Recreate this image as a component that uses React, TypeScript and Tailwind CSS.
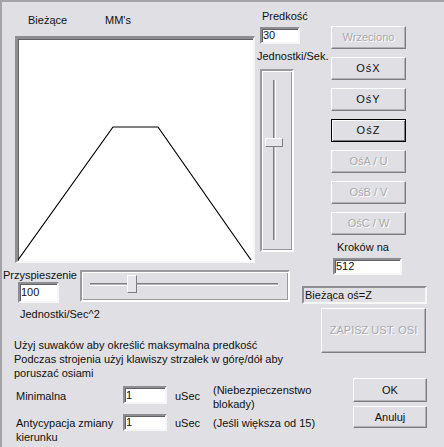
import React from "react";

const raised =
  "border border-t-white border-l-white border-r-[#7d7d81] border-b-[#7d7d81] shadow-[inset_-1px_-1px_0_#b2b2b6]";
const sunken =
  "border-2 border-t-[#8e8e92] border-l-[#8e8e92] border-r-[#f7f7f7] border-b-[#f7f7f7] shadow-[inset_1px_1px_0_#626266]";
const etched =
  "border-2 border-t-[#9a9a9e] border-l-[#9a9a9e] border-r-white border-b-white shadow-[inset_1px_1px_0_#ffffff,inset_-1px_-1px_0_#9a9a9e]";

interface BtnProps {
  label: string;
  disabled?: boolean;
  focused?: boolean;
  className?: string;
}

const Btn = ({ label, disabled, focused, className }: BtnProps) => (
  <div
    className={`flex items-center justify-center bg-[#e0dfe3] text-[11px] ${
      focused
        ? "border border-black shadow-[inset_1px_1px_0_#ffffff,inset_-1px_-1px_0_#7d7d81]"
        : raised
    } ${disabled ? "text-[#a9a9ad] [text-shadow:1px_1px_0_#ffffff]" : "text-[#111]"} ${className ?? ""}`}
  >
    {label}
  </div>
);

const Field = ({ value, className }: { value: string; className?: string }) => (
  <div className={`flex items-center bg-white pl-[1px] ${sunken} ${className ?? ""}`}>{value}</div>
);

const Thumb = ({ className }: { className: string }) => (
  <div
    className={`absolute bg-[#e6e6ea] border border-t-white border-l-white border-r-[#7d7d81] border-b-[#7d7d81] ${className}`}
  />
);

export default function App() {
  return (
    <div className="w-[444px] h-[447px] overflow-hidden bg-[#e0dfe3] border-l-2 border-t-2 border-[#a4a4a8] text-[11px] leading-[13px] text-[#111] font-['Liberation_Sans',Arial,sans-serif]">
      {/* top part: graph, speed slider, axis buttons */}
      <div className="flex h-[261px]">
        <div className="ml-[13px] w-[240px] flex flex-col">
          <div className="flex h-[34px] pt-[12px] pl-[13px]">
            <span className="w-[77px]">Bieżące</span>
            <span>MM's</span>
          </div>
          <div className={`relative h-[227px] bg-white ${sunken} border-t-[3px] border-l-[3px]`}>
            <svg className="absolute inset-0" width="235" height="222" viewBox="0 0 235 222">
              <polyline
                points="0,221 95,88 140,88 233,221"
                fill="none"
                stroke="#000"
                strokeWidth="1.2"
              />
            </svg>
          </div>
        </div>

        <div className="ml-[4px] w-[34px] flex flex-col">
          <span className="mt-[8px] ml-[3px] whitespace-nowrap">Predkość</span>
          <Field value="30" className="mt-[4px] ml-[1px] w-[40px] h-[17px]" />
          <span className="mt-[6px] ml-[-2px] whitespace-nowrap">Jednostki/Sek.</span>
          <div className={`relative mt-[6px] ml-[1px] w-[34px] h-[183px] ${etched}`}>
            <div className="absolute left-[11px] top-[9px] w-[3px] h-[160px] bg-[#b8b8bc] border-l border-l-[#7d7d81] border-r border-r-white" />
            <Thumb className="left-[3px] top-[67px] w-[18px] h-[9px]" />
          </div>
        </div>

        <div className="ml-[38px] w-[75px] flex flex-col">
          <div className="mt-[24px] flex flex-col gap-[8px]">
            <Btn label="Wrzeciono" disabled className="h-[23px]" />
            <Btn label="OśX" className="h-[23px] tracking-[1px]" />
            <Btn label="OśY" className="h-[23px] tracking-[1px]" />
            <Btn label="OśZ" focused className="h-[23px] tracking-[1px]" />
            <Btn label="OśA / U" disabled className="h-[23px]" />
            <Btn label="OśB / V" disabled className="h-[23px]" />
            <Btn label="OśC / W" disabled className="h-[23px]" />
          </div>
          <span className="mt-[6px] ml-[6px] whitespace-nowrap">Kroków na</span>
          <Field value="512" className="mt-[4px] ml-[2px] w-[69px] h-[19px]" />
        </div>
      </div>

      {/* middle part: acceleration slider, status, save */}
      <div className="flex h-[115px]">
        <div className="w-[288px] flex flex-col">
          <div className="flex">
            <div className="ml-[1px] w-[77px] flex flex-col">
              <span className="mt-[6px] h-[13px] whitespace-nowrap">Przyspieszenie</span>
              <Field value="100" className="ml-[15px] w-[41px] h-[21px]" />
              <span className="mt-[5px] ml-[17px] whitespace-nowrap">Jednostki/Sec^2</span>
            </div>
            <div className={`relative mt-[7px] w-[210px] h-[32px] ${etched}`}>
              <div className="absolute left-[8px] top-[11px] w-[188px] h-[3px] bg-[#b8b8bc] border-t border-t-[#7d7d81] border-b border-b-white" />
              <Thumb className="left-[45px] top-[3px] w-[10px] h-[18px]" />
            </div>
          </div>
          <p className="mt-[17px] ml-[12px] leading-[14px] whitespace-nowrap">
            Użyj suwaków aby określić maksymalna predkość
            <br />
            Podczas strojenia użyj klawiszy strzałek w górę/dół aby
            <br />
            poruszać osiami
          </p>
        </div>
        <div className="flex flex-col">
          <div className={`mt-[23px] ml-[12px] w-[125px] h-[18px] flex items-center pl-[1px] ${sunken} shadow-none border`}>
            Bieżąca oś=Z
          </div>
          <Btn label="ZAPISZ UST. OSI" disabled className="mt-[4px] ml-[31px] w-[105px] h-[45px]" />
        </div>
      </div>

      {/* bottom part: timing fields and dialog buttons */}
      <div className="flex">
        <div className="ml-[14px] w-[335px] flex flex-col">
          <div className="flex h-[33px]">
            <span className="w-[107px] mt-[12px]">Minimalna</span>
            <Field value="1" className="mt-[8px] w-[44px] h-[18px]" />
            <span className="ml-[8px] w-[38px] mt-[12px]">uSec</span>
            <span className="mt-[5px] leading-[14px]">
              (Niebezpieczenstwo
              <br />
              blokady)
            </span>
          </div>
          <div className="flex">
            <span className="w-[107px] mt-[5px] leading-[14px]">
              Antycypacja zmiany
              <br />
              kierunku
            </span>
            <Field value="1" className="mt-[3px] w-[44px] h-[17px]" />
            <span className="ml-[8px] w-[38px] mt-[6px]">uSec</span>
            <span className="mt-[6px] whitespace-nowrap">(Jeśli większa od 15)</span>
          </div>
        </div>
        <div className="ml-[2px] flex flex-col">
          <Btn label="OK" className="w-[74px] h-[24px]" />
          <Btn label="Anuluj" className="mt-[4px] w-[74px] h-[22px]" />
        </div>
      </div>
    </div>
  );
}
